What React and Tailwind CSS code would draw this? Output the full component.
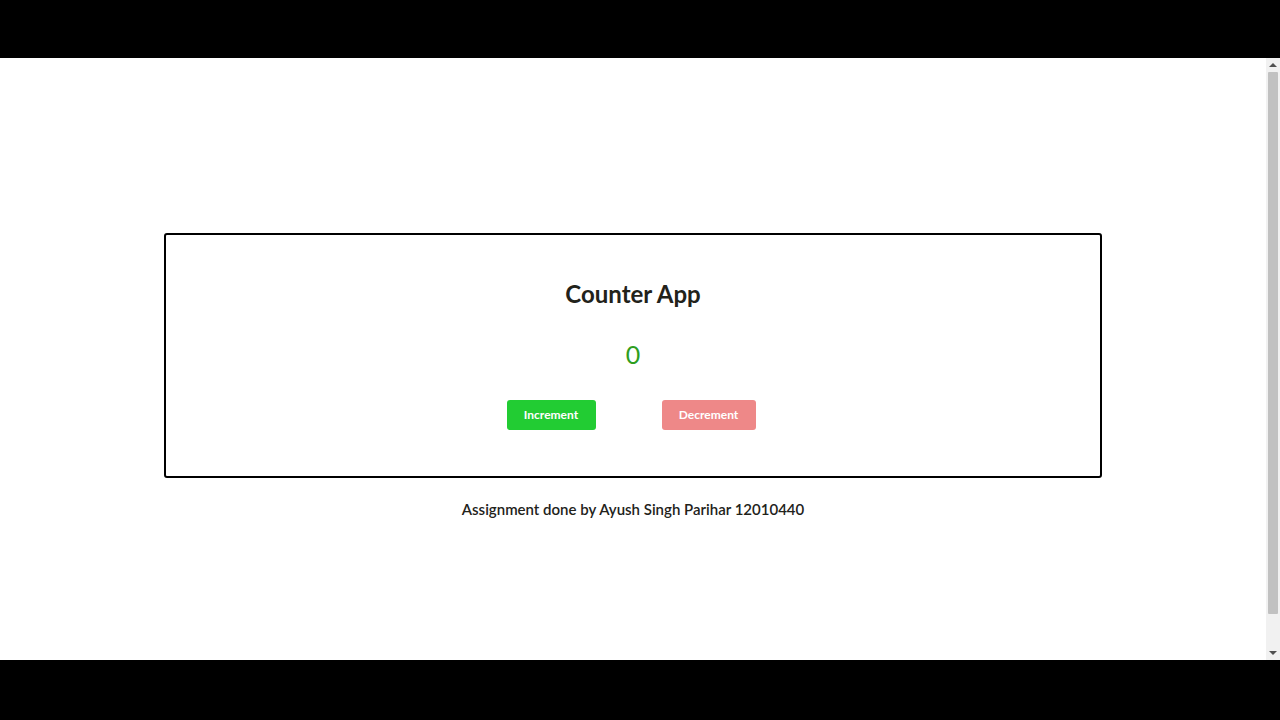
import { useState } from 'react';

function Scrollbar() {
  return (
    <div className="w-[14px] shrink-0 bg-[#f1f1f1] flex flex-col items-center">
      <div className="h-[14px] w-full flex items-center justify-center">
        <div className="w-0 h-0 border-l-[4px] border-r-[4px] border-b-[4px] border-l-transparent border-r-transparent border-b-[#505050]" />
      </div>
      <div className="w-[10px] h-[542px] bg-[#c1c1c1] rounded-[1px]" />
      <div className="flex-1" />
      <div className="h-[14px] w-full flex items-center justify-center">
        <div className="w-0 h-0 border-l-[4px] border-r-[4px] border-t-[4px] border-l-transparent border-r-transparent border-t-[#505050]" />
      </div>
    </div>
  );
}

export default function App() {
  const [count, setCount] = useState(0);

  return (
    <div className="w-[1280px] h-[720px] bg-black flex flex-col" style={{ fontFamily: 'Lato, "Open Sans", sans-serif' }}>
      <div className="h-[58px] shrink-0" />
      <div className="h-[602px] bg-white flex">
        <div className="flex-1 flex flex-col items-center pt-[175px]">
          <div className="w-[938px] h-[245px] border-2 border-black rounded-[3px] flex flex-col items-center pt-[43px]">
            <h1 className="text-[24px] font-bold text-[#22221a] leading-[32px]">Counter App</h1>
            <div className="mt-[28px] text-[25px] text-[#2e9e1e] leading-[32px]">{count}</div>
            <div className="mt-[30px] flex gap-[66px] pr-[4px]">
              <button
                onClick={() => setCount(count + 1)}
                className="w-[89px] h-[30px] bg-[#22cc33] text-white text-[12px] font-bold rounded-[3px]"
              >
                Increment
              </button>
              <button
                onClick={() => setCount(count - 1)}
                className="w-[94px] h-[30px] bg-[#ee8888] text-white text-[12px] font-bold rounded-[3px]"
              >
                Decrement
              </button>
            </div>
          </div>
          <p className="mt-[20px] text-[15px] font-semibold text-[#22221a] leading-[22px]">
            Assignment done by Ayush Singh Parihar 12010440
          </p>
        </div>
        <Scrollbar />
      </div>
      <div className="flex-1" />
    </div>
  );
}
